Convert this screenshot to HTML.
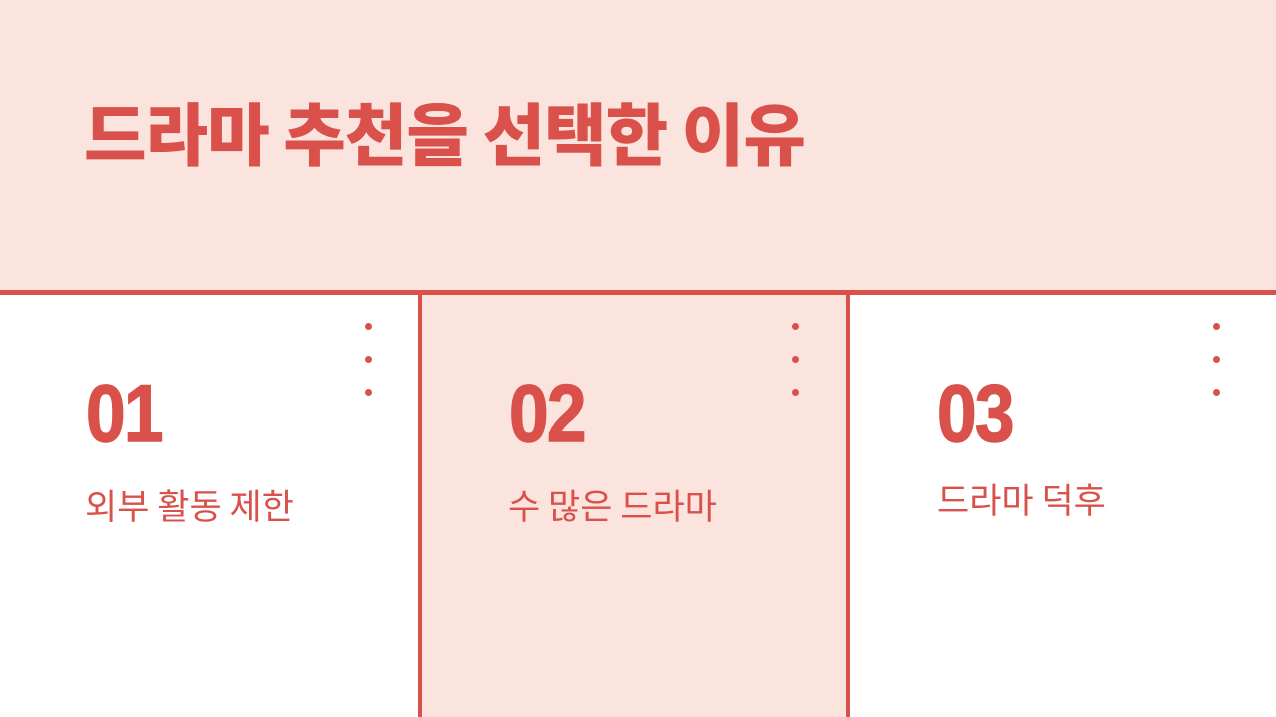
<!DOCTYPE html>
<html><head><meta charset="utf-8"><style>
body{margin:0;width:1276px;height:717px;overflow:hidden;position:relative;background:#fff;font-family:"Liberation Sans","Noto Sans CJK KR",sans-serif;color:#D9514A}
.top{position:absolute;left:0;top:0;width:1276px;height:291px;background:#FBE4DE}
.hl{position:absolute;left:0;top:290px;width:1276px;height:5px;background:#D9514A}
.mid{position:absolute;left:418px;top:290px;width:432px;height:427px;background:#FBE4DE;border-left:4px solid #D9514A;border-right:4px solid #D9514A;box-sizing:border-box}
h1{position:absolute;left:84px;top:81px;margin:0;font-size:68px;font-weight:900;letter-spacing:-1px;line-height:100px;font-family:"Noto Sans CJK KR",sans-serif}
.num{position:absolute;top:364px;font-size:81px;font-weight:bold;line-height:100px;transform:scaleX(0.88);transform-origin:left;letter-spacing:-2px;-webkit-text-stroke:1.5px #D9514A}
.lab{position:absolute;top:480px;font-size:35px;line-height:50px;font-family:"Noto Sans CJK KR",sans-serif;font-weight:400}
.dot{position:absolute;width:7px;height:7px;border-radius:50%;background:#D9514A}
</style></head><body>
<div class="top"></div><div class="mid"></div><div class="hl"></div>
<h1>드라마 추천을 선택한 이유</h1>
<div class="num" style="left:86px">01</div>
<div class="num" style="left:509px">02</div>
<div class="num" style="left:937px">03</div>
<div class="lab" style="left:85px">외부 활동 제한</div>
<div class="lab" style="left:508px">수 많은 드라마</div>
<div class="lab" style="left:937px;top:474px">드라마 덕후</div>
<div class="dot" style="left:365px;top:323px"></div><div class="dot" style="left:365px;top:356px"></div><div class="dot" style="left:365px;top:389px"></div>
<div class="dot" style="left:792px;top:323px"></div><div class="dot" style="left:792px;top:356px"></div><div class="dot" style="left:792px;top:389px"></div>
<div class="dot" style="left:1213px;top:323px"></div><div class="dot" style="left:1213px;top:356px"></div><div class="dot" style="left:1213px;top:389px"></div>
</body></html>
